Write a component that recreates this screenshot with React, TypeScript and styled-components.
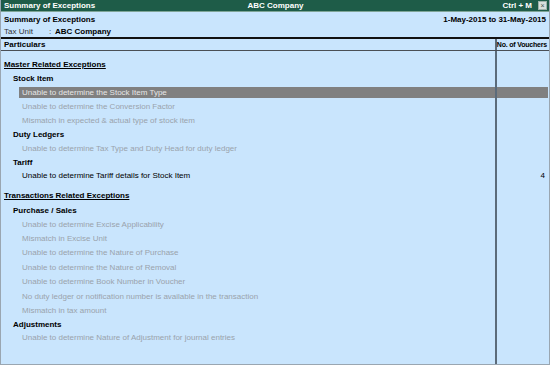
import React from "react";
import styled, { createGlobalStyle } from "styled-components";

const GlobalStyle = createGlobalStyle`
  html, body {
    margin: 0;
    padding: 0;
    background: #c9e5fd;
  }
  body {
    font-family: "Liberation Sans", Arial, sans-serif;
    font-size: 8px;
  }
`;

const Window = styled.div`
  width: 550px;
  height: 365px;
  box-sizing: border-box;
  display: flex;
  flex-direction: column;
  background: #c9e5fd;
  border: 1px solid #9aa6b1;
  border-top: none;
  overflow: hidden;
`;

const TitleBar = styled.div`
  height: 11px;
  display: grid;
  grid-template-columns: 1fr auto 1fr;
  align-items: center;
  background: #1e5c48;
  border-bottom: 1px solid #7fa597;
  color: #ffffff;
  font-weight: bold;
  padding: 0 2px 0 3px;
  line-height: 11px;
`;

const TitleRight = styled.div`
  display: flex;
  justify-content: flex-end;
  align-items: center;
  gap: 6px;
`;

const CloseBox = styled.span`
  width: 7px;
  height: 7px;
  border: 1px solid #9fb2aa;
  background: #d8e0dc;
  color: #45574f;
  font-size: 7px;
  line-height: 7px;
  text-align: center;
  font-weight: normal;
`;

const Header = styled.div`
  padding: 1px 3px 0;
  height: 24px;
  display: grid;
  grid-template-columns: 1fr auto;
  grid-template-rows: 12px 12px;
  align-items: center;
`;

const Bold = styled.span`
  font-weight: bold;
  color: #000;
`;

const TaxUnit = styled.div`
  display: flex;
  color: #333;
`;

const TaxLabel = styled.span`
  width: 45px;
`;

const Colon = styled.span`
  width: 6px;
`;

const Table = styled.div`
  flex: 1;
  display: flex;
  flex-direction: column;
  border-top: 2px solid #111;
`;

const Row = styled.div<{ $h: number }>`
  display: grid;
  grid-template-columns: 1fr 54px;
  height: ${(p) => p.$h}px;
`;

const HeadRow = styled(Row)`
  border-bottom: 1px solid #4a4f55;
`;

const Cell = styled.div<{ $indent?: number; $top?: number }>`
  box-sizing: border-box;
  height: 100%;
  display: flex;
  align-items: center;
  padding-left: ${(p) => p.$indent ?? 3}px;
  padding-top: ${(p) => p.$top ?? 0}px;
  white-space: nowrap;
`;

const NumCell = styled.div<{ $top?: number }>`
  box-sizing: border-box;
  height: 100%;
  display: flex;
  align-items: center;
  justify-content: flex-end;
  border-left: 2px solid #5b6b7a;
  padding-right: 2px;
  padding-top: ${(p) => p.$top ?? 0}px;
  white-space: nowrap;
`;

const ColumnHead = styled.span`
  font-weight: bold;
  font-size: 7px;
  letter-spacing: -0.2px;
`;

const Label = styled.span<{ $tone: string; $selected?: boolean; $underline?: boolean }>`
  flex: 1;
  height: 11px;
  line-height: 11px;
  padding-left: 3px;
  font-weight: ${(p) => (p.$tone === "section" || p.$tone === "group" ? "bold" : "normal")};
  text-decoration: ${(p) => (p.$underline ? "underline" : "none")};
  color: ${(p) =>
    p.$selected ? "#e6e6e6" : p.$tone === "muted" ? "#9aa3ac" : "#000"};
  background: ${(p) => (p.$selected ? "#808080" : "transparent")};
`;

const NumFill = styled.span<{ $selected?: boolean }>`
  flex: 1;
  height: 11px;
  line-height: 11px;
  text-align: right;
  margin-right: -1px;
  padding-right: 3px;
  background: ${(p) => (p.$selected ? "#808080" : "transparent")};
`;

const Filler = styled.div`
  flex: 1;
  display: grid;
  grid-template-columns: 1fr 54px;
`;

const FillerRight = styled.div`
  border-left: 2px solid #5b6b7a;
`;

type Line = {
  kind: "section" | "group" | "item";
  text: string;
  muted?: boolean;
  selected?: boolean;
  count?: string;
  top?: number;
};

const lines: Line[] = [
  { kind: "section", text: "Master Related Exceptions", top: 5 },
  { kind: "group", text: "Stock Item" },
  { kind: "item", text: "Unable to determine the Stock Item Type", selected: true },
  { kind: "item", text: "Unable to determine the Conversion Factor", muted: true },
  { kind: "item", text: "Mismatch in expected & actual type of stock item", muted: true },
  { kind: "group", text: "Duty Ledgers" },
  { kind: "item", text: "Unable to determine Tax Type and Duty Head for duty ledger", muted: true },
  { kind: "group", text: "Tariff" },
  { kind: "item", text: "Unable to determine Tariff details for Stock Item", count: "4" },
  { kind: "section", text: "Transactions Related Exceptions", top: 5 },
  { kind: "group", text: "Purchase / Sales" },
  { kind: "item", text: "Unable to determine Excise Applicability", muted: true },
  { kind: "item", text: "Mismatch in Excise Unit", muted: true },
  { kind: "item", text: "Unable to determine the Nature of Purchase", muted: true },
  { kind: "item", text: "Unable to determine the Nature of Removal", muted: true },
  { kind: "item", text: "Unable to determine Book Number in Voucher", muted: true },
  { kind: "item", text: "No duty ledger or notification number is available in the transaction", muted: true },
  { kind: "item", text: "Mismatch in tax amount", muted: true },
  { kind: "group", text: "Adjustments" },
  { kind: "item", text: "Unable to determine Nature of Adjustment for journal entries", muted: true },
];

const heights = { section: 16, group: 13, item: 14.4 };
const indents = { section: 0, group: 9, item: 18 };

const App: React.FC = () => {
  return (
    <>
      <GlobalStyle />
      <Window>
        <TitleBar>
          <span>Summary of Exceptions</span>
          <span>ABC Company</span>
          <TitleRight>
            <span>Ctrl + M</span>
            <CloseBox>×</CloseBox>
          </TitleRight>
        </TitleBar>
        <Header>
          <Bold>Summary of Exceptions</Bold>
          <Bold>1-May-2015 to 31-May-2015</Bold>
          <TaxUnit>
            <TaxLabel>Tax Unit</TaxLabel>
            <Colon>:</Colon>
            <Bold>ABC Company</Bold>
          </TaxUnit>
        </Header>
        <Table>
          <HeadRow $h={11}>
            <Cell>
              <Bold>Particulars</Bold>
            </Cell>
            <NumCell>
              <ColumnHead>No. of Vouchers</ColumnHead>
            </NumCell>
          </HeadRow>
          {lines.map((l, i) => (
            <Row key={i} $h={heights[l.kind] + (l.top ?? 0)}>
              <Cell $indent={indents[l.kind]} $top={l.top}>
                <Label
                  $tone={l.muted ? "muted" : l.kind}
                  $selected={l.selected}
                  $underline={l.kind === "section"}
                >
                  {l.text}
                </Label>
              </Cell>
              <NumCell $top={l.top}>
                <NumFill $selected={l.selected}>{l.count}</NumFill>
              </NumCell>
            </Row>
          ))}
          <Filler>
            <div />
            <FillerRight />
          </Filler>
        </Table>
      </Window>
    </>
  );
};

export default App;
